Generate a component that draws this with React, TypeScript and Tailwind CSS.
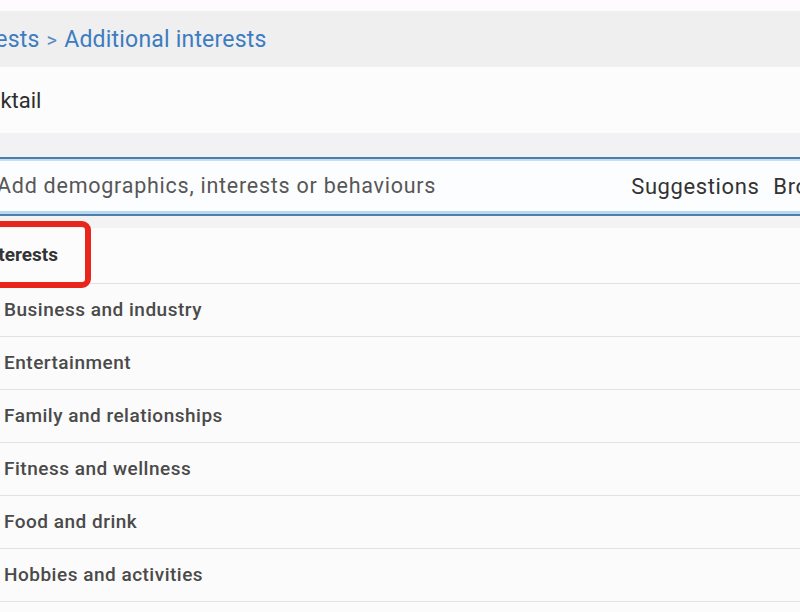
import React from "react";

const rows = [
    "Business and industry",
    "Entertainment",
    "Family and relationships",
    "Fitness and wellness",
    "Food and drink",
    "Hobbies and activities",
    "Lifestyle and culture",
];

const App = () => {
    return (
        <div className="relative w-[800px] h-[612px] overflow-hidden bg-[#fbfbfb] font-['Roboto','Liberation_Sans',sans-serif]">
            {/* top strip */}
            <div className="h-[11px] bg-[#fdfbfd]" />

            {/* breadcrumb */}
            <div className="h-[56px] bg-[#efeff0] flex items-center">
                <div className="-ml-[52px] mt-[2px] flex items-center whitespace-nowrap text-[23px] tracking-[0.2px] text-[#3d7cc0]">
                    <span>Interests</span>
                    <span className="mx-[7px] text-[20px] text-[#5a8ac0]">&gt;</span>
                    <span>Additional interests</span>
                </div>
            </div>

            {/* selected item */}
            <div className="h-[66px] bg-[#fcfcfc] flex items-center">
                <p className="-ml-[38px] text-[22px] text-[#2e2e2e] whitespace-nowrap">
                    Cocktail
                </p>
            </div>

            <div className="h-[24px] bg-[#f2f2f4]" />

            {/* search input */}
            <div className="-ml-[20px] h-[59px] border-y-2 border-[#4f7eab] bg-[#fcfdfe] shadow-[inset_0_2px_0_#c4def3,inset_0_-3px_0_#b9d9f2] flex items-center justify-between whitespace-nowrap">
                <p className="ml-[17px] text-[21.5px] tracking-[0.75px] text-[#575757]">
                    Add demographics, interests or behaviours
                </p>
                <div className="flex gap-[14px] -mr-[50px] text-[22px] tracking-[0.6px] text-[#333]">
                    <span>Suggestions</span>
                    <span>Browse</span>
                </div>
            </div>

            <div className="h-[12px] bg-[#f3f3f4]" />

            {/* list */}
            <div className="h-[56px] flex items-center border-b border-[#e2e2e2] bg-[#fcfcfc]">
                <p className="-ml-[18px] text-[19px] font-bold text-[#333] whitespace-nowrap">
                    Interests
                </p>
            </div>
            {rows.map((r) => (
                <div
                    key={r}
                    className="h-[53px] flex items-center border-b border-[#e2e2e2] bg-[#fbfbfb]"
                >
                    <p className="ml-[4px] text-[19px] tracking-[0.5px] font-medium text-[#4a4a4a] whitespace-nowrap">
                        {r}
                    </p>
                </div>
            ))}

            {/* red highlight annotation */}
            <div className="absolute left-[-30px] top-[221px] w-[121px] h-[67px] border-[6px] border-[#e8261c] rounded-[9px]" />
        </div>
    );
};

export default App;
